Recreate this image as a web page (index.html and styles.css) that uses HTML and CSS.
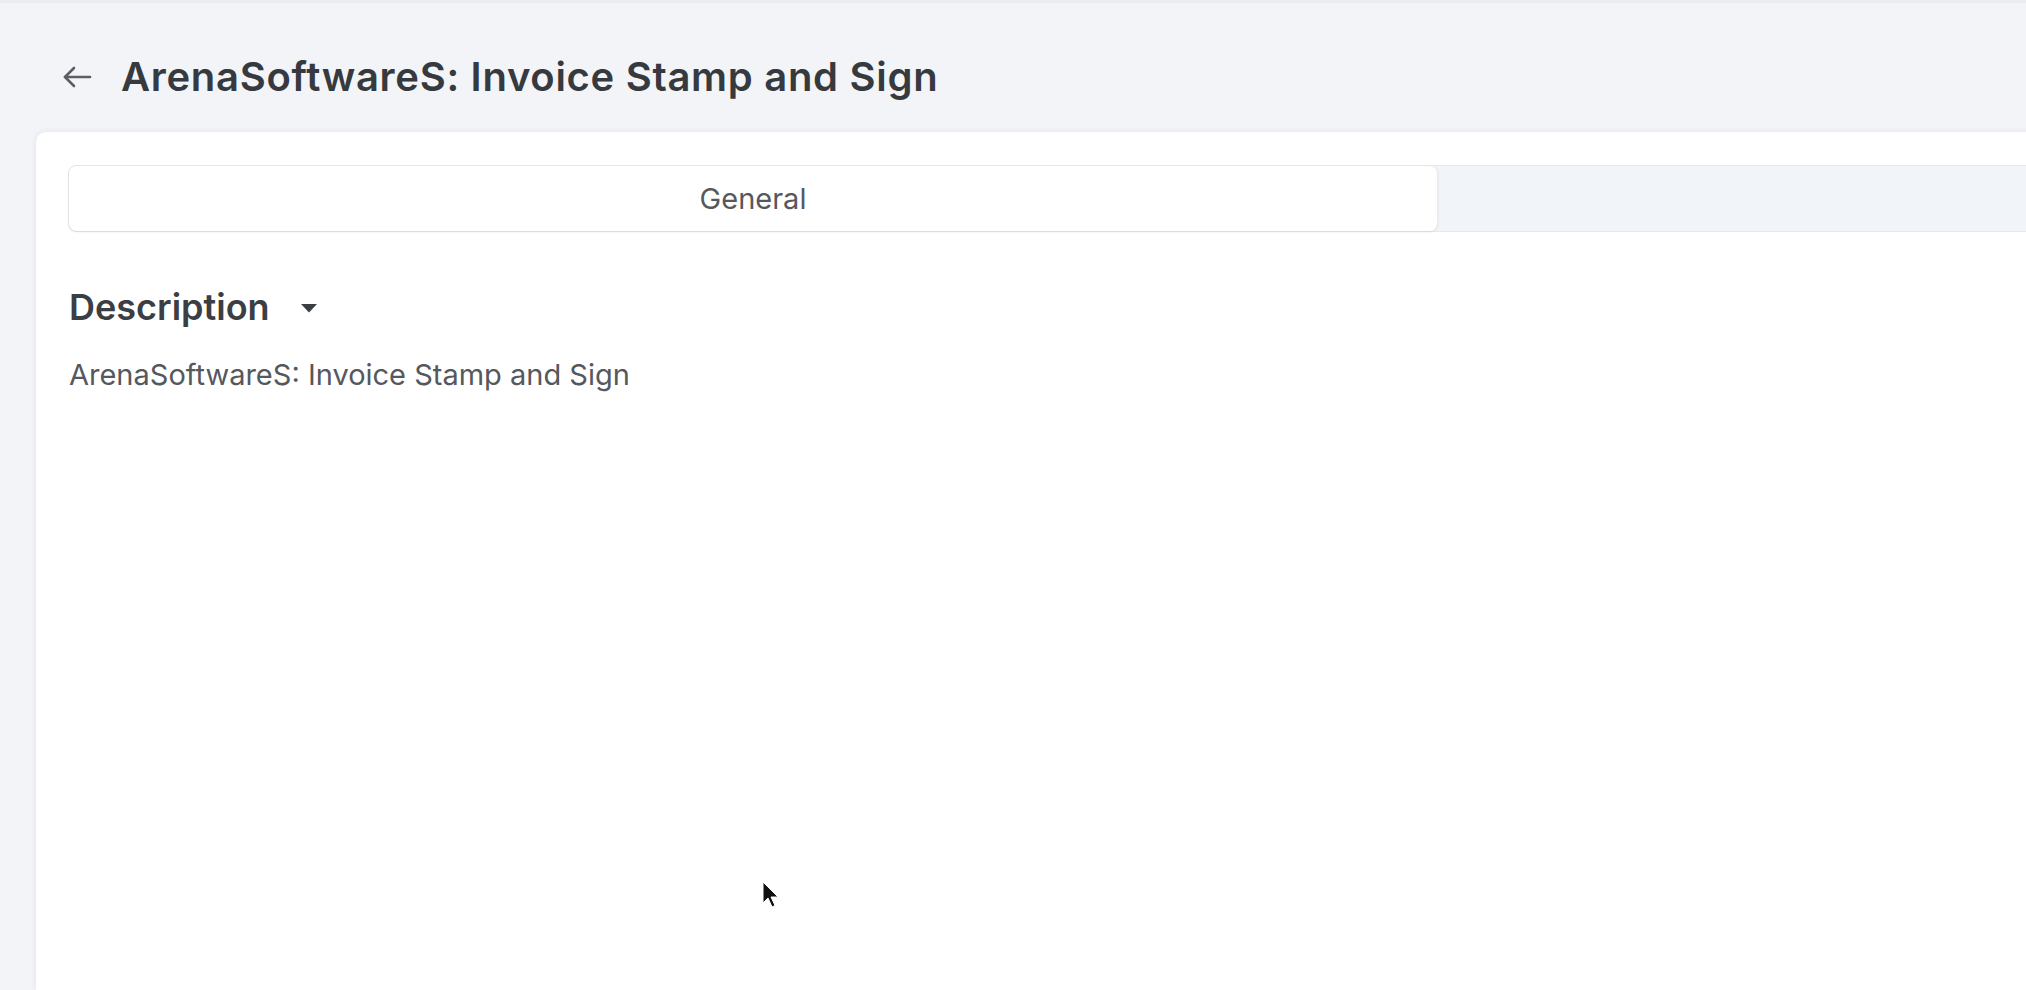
FILE: index.html
```html
<!DOCTYPE html>
<html lang="en">
<head>
<meta charset="utf-8">
<title>ArenaSoftwareS: Invoice Stamp and Sign</title>
<link rel="stylesheet" href="styles.css">
</head>
<body>
<div class="page">
  <header class="page-header">
    <button class="back-btn" aria-label="Back">
      <svg width="30" height="22" viewBox="0 0 30 22" fill="none" stroke="#5a5d63" stroke-width="2.6" stroke-linecap="round" stroke-linejoin="round">
        <path d="M28 11H3"/>
        <path d="M12 2L3 11l9 9"/>
      </svg>
    </button>
    <h1 class="page-title">ArenaSoftwareS: Invoice Stamp and Sign</h1>
  </header>
  <main class="card">
    <div class="tabs">
      <div class="tab tab-active">General</div>
      <div class="tab tab-rest"></div>
    </div>
    <section class="section">
      <div class="section-head">
        <h2 class="section-title">Description</h2>
        <svg class="caret" width="18" height="10" viewBox="0 0 18 10"><path d="M1 1h16L9 9.5z" fill="#3b3e43"/></svg>
      </div>
      <p class="section-text">ArenaSoftwareS: Invoice Stamp and Sign</p>
    </section>
  </main>
  <svg class="cursor" width="20" height="28" viewBox="0 0 20 28">
    <path d="M2 1v21l5-5 4 9 3-1.5-4-8.5h7z" fill="#111" stroke="#fff" stroke-width="1"/>
  </svg>
</div>
</body>
</html>
```
FILE: styles.css
```css
* { box-sizing: border-box; }
html, body {
  margin: 0;
  padding: 0;
  height: 100%;
}
body {
  background: #f2f4f8;
  font-family: Inter, "Noto Sans", "Liberation Sans", sans-serif;
  color: #3b3e43;
  overflow: hidden;
}
.page {
  position: relative;
  height: 100%;
  border-top: 3px solid #eaecf0;
  display: flex;
  flex-direction: column;
}
.page-header {
  display: flex;
  align-items: center;
  height: 129px;
  padding: 18px 0 0 62px;
  gap: 29px;
}
.back-btn {
  background: none;
  border: 0;
  padding: 0;
  display: flex;
  align-items: center;
  cursor: pointer;
}
.page-title {
  margin: 0;
  font-size: 40px;
  font-weight: 600;
  letter-spacing: 0.7px;
  color: #36393e;
}
.card {
  flex: 1;
  margin-left: 36px;
  width: calc(100% + 200px);
  background: #fff;
  border-top-left-radius: 10px;
  box-shadow: 0 0 6px rgba(30, 40, 60, 0.08);
  padding: 33px 0 0 32px;
}
.tabs {
  display: flex;
  height: 67px;
  background: #f1f4f9;
  border: 1.5px solid #e6e8ec;
  border-radius: 8px;
}
.tab {
  display: flex;
  align-items: center;
  justify-content: center;
  font-size: 29px;
  color: #55585d;
}
.tab-active {
  width: 1369px;
  background: #fff;
  border-radius: 8px;
  box-shadow: 0 1px 3px rgba(0, 0, 0, 0.08);
  border-right: 1px solid #e8eaee;
}
.tab-rest { flex: 1; }
.section { padding: 53px 0 0 1px; }
.section-head {
  display: flex;
  align-items: center;
  gap: 30px;
}
.section-title {
  margin: 0;
  font-size: 36px;
  font-weight: 600;
  color: #3b3e43;
}
.caret { margin-top: 2px; }
.section-text {
  margin: 28px 0 0;
  font-size: 29px;
  color: #55585d;
}
.cursor {
  position: absolute;
  left: 761px;
  top: 878px;
}
```
